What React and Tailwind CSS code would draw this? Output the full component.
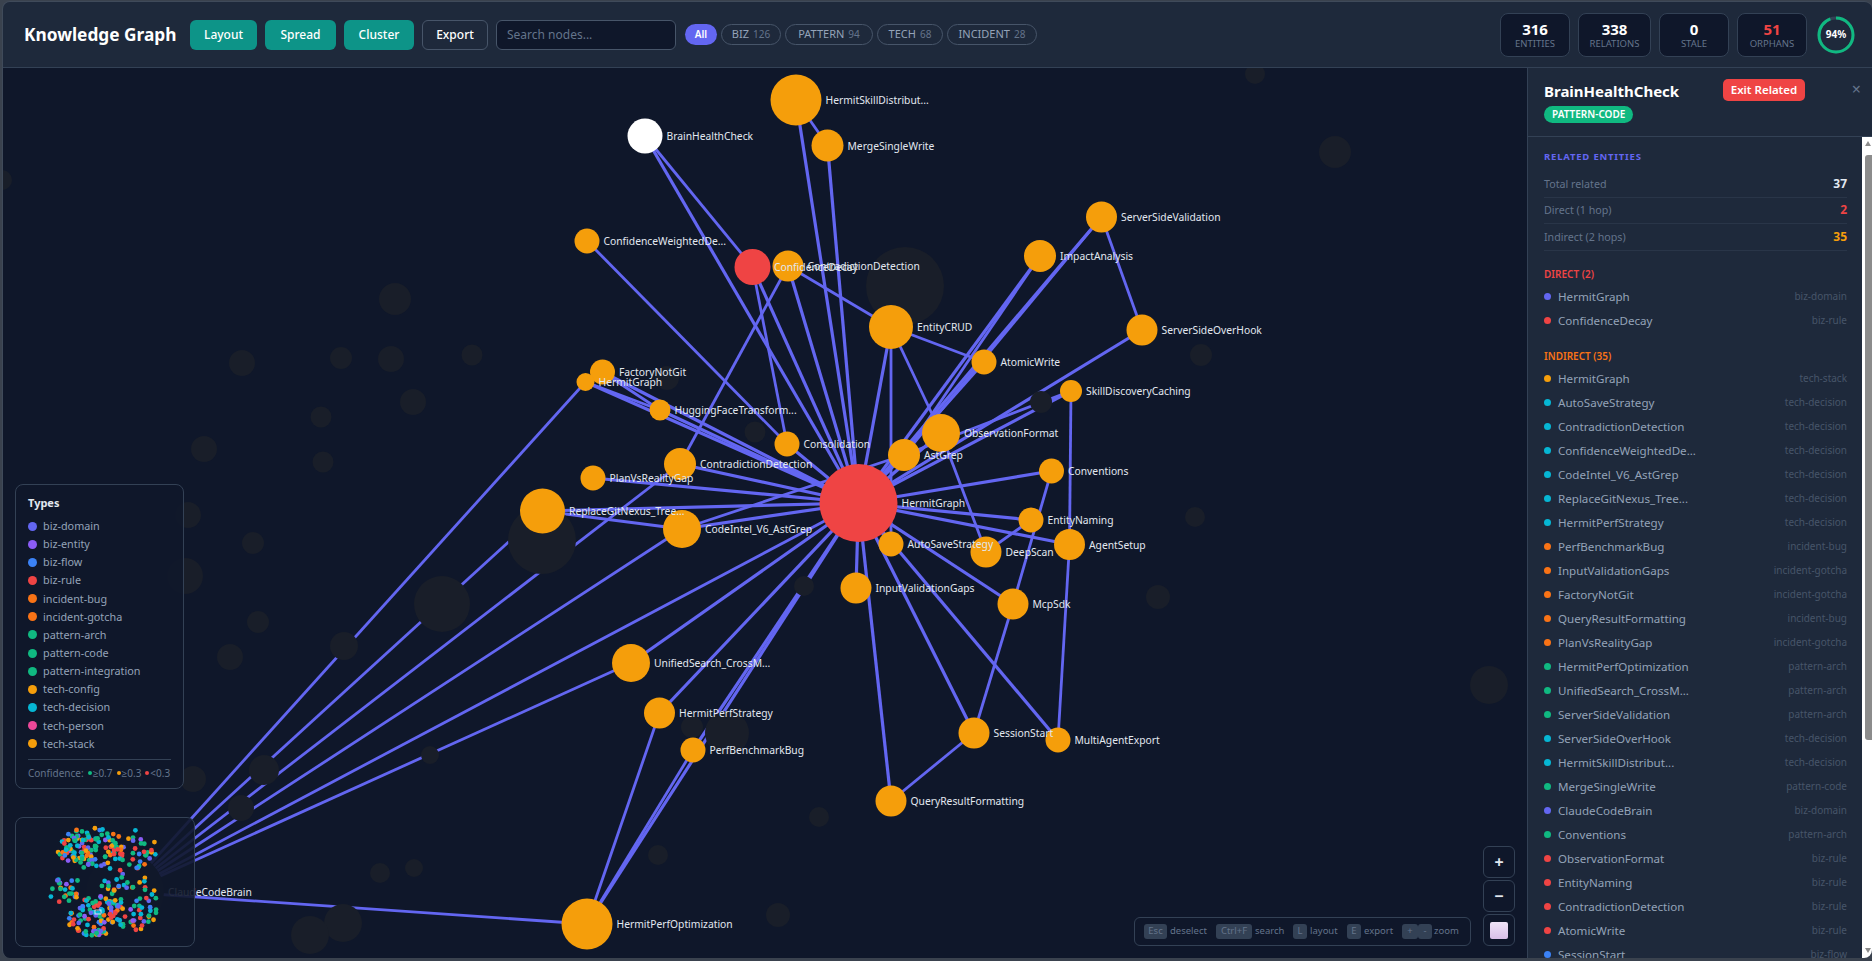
import React from 'react'

const FONT = { fontFamily: '"Noto Sans", "Open Sans", sans-serif' }

const nodes = {
  skill: { x: 796, y: 100, r: 25.5, label: 'HermitSkillDistribut...' },
  brain: { x: 645, y: 136, r: 17.5, label: 'BrainHealthCheck', fill: '#ffffff' },
  merge: { x: 827.5, y: 145.5, r: 16, label: 'MergeSingleWrite' },
  weighted: { x: 587, y: 241, r: 12.5, label: 'ConfidenceWeightedDe...' },
  decay: { x: 752.5, y: 267, r: 18, label: 'ConfidenceDecay', fill: '#ef4444', labelX: 774 },
  contra: { x: 788, y: 266, r: 15.5, label: 'ContradictionDetection' },
  crud: { x: 891, y: 327, r: 22, label: 'EntityCRUD' },
  impact: { x: 1040, y: 256, r: 16, label: 'ImpactAnalysis' },
  validation: { x: 1101.5, y: 217, r: 15.5, label: 'ServerSideValidation' },
  overhook: { x: 1142, y: 330, r: 15.5, label: 'ServerSideOverHook' },
  atomic: { x: 984, y: 362, r: 12.5, label: 'AtomicWrite' },
  caching: { x: 1071, y: 391, r: 11, label: 'SkillDiscoveryCaching' },
  factory: { x: 602.5, y: 372, r: 12.5, label: 'FactoryNotGit' },
  hgSmall: { x: 585.5, y: 382, r: 9, label: 'HermitGraph' },
  hugging: { x: 660, y: 410, r: 10.5, label: 'HuggingFaceTransform...' },
  consolidation: { x: 787, y: 444, r: 12.5, label: 'Consolidation' },
  observation: { x: 941, y: 433, r: 19, label: 'ObservationFormat' },
  astgrep: { x: 904, y: 455, r: 16, label: 'AstGrep' },
  contra2: { x: 680, y: 464, r: 16, label: 'ContradictionDetection' },
  plan: { x: 593, y: 478, r: 12.5, label: 'PlanVsRealityGap' },
  conventions: { x: 1051.5, y: 471, r: 12.5, label: 'Conventions' },
  hub: { x: 858.5, y: 503, r: 39, label: 'HermitGraph', fill: '#ef4444' },
  replace: { x: 542.5, y: 511, r: 22.5, label: 'ReplaceGitNexus_Tree...' },
  codeintel: { x: 682, y: 529, r: 19, label: 'CodeIntel_V6_AstGrep' },
  autosave: { x: 891, y: 544, r: 12.5, label: 'AutoSaveStrategy' },
  naming: { x: 1031, y: 520, r: 12.5, label: 'EntityNaming' },
  deepscan: { x: 986, y: 552, r: 15.5, label: 'DeepScan' },
  agent: { x: 1069.5, y: 544.5, r: 15.5, label: 'AgentSetup' },
  input: { x: 856, y: 588, r: 15.5, label: 'InputValidationGaps' },
  mcp: { x: 1013, y: 604, r: 15.5, label: 'McpSdk' },
  unified: { x: 631, y: 663, r: 19, label: 'UnifiedSearch_CrossM...' },
  perfStrategy: { x: 659.5, y: 713, r: 15.5, label: 'HermitPerfStrategy' },
  perfBug: { x: 693, y: 750, r: 12.5, label: 'PerfBenchmarkBug' },
  session: { x: 974, y: 733, r: 15.5, label: 'SessionStart' },
  multi: { x: 1058, y: 740, r: 12.5, label: 'MultiAgentExport' },
  query: { x: 891, y: 801, r: 15.5, label: 'QueryResultFormatting' },
  perfOpt: { x: 587, y: 924, r: 25.5, label: 'HermitPerfOptimization' },
  claude: { x: 125, y: 892, r: 39, label: 'ClaudeCodeBrain', fill: '#191e29' },
}

const hubLinks = [
  'skill', 'merge', 'brain', 'decay', 'contra', 'crud', 'impact', 'validation', 'overhook', 'atomic', 'caching',
  'factory', 'hgSmall', 'hugging', 'consolidation', 'observation', 'astgrep', 'contra2', 'plan', 'conventions',
  'replace', 'codeintel', 'autosave', 'naming', 'agent', 'input', 'mcp', 'unified', 'perfStrategy', 'perfBug',
  'session', 'multi', 'query', 'perfOpt',
]

const extraLinks = [
  ['skill', 'merge'], ['brain', 'decay'], ['contra', 'crud'], ['weighted', 'consolidation'],
  ['decay', 'consolidation'], ['contra', 'contra2'], ['impact', 'astgrep'], ['validation', 'overhook'],
  ['validation', 'astgrep'], ['crud', 'atomic'], ['crud', 'autosave'], ['crud', 'observation'],
  ['observation', 'deepscan'], ['caching', 'agent'], ['caching', 'astgrep'], ['conventions', 'mcp'],
  ['agent', 'multi'], ['mcp', 'session'], ['session', 'query'], ['perfOpt', 'perfStrategy'],
  ['perfOpt', 'perfBug'], ['naming', 'deepscan'], ['codeintel', 'astgrep'], ['replace', 'codeintel'],
  ['factory', 'hugging'], ['hgSmall', 'hugging'], ['claude', 'hgSmall'], ['claude', 'replace'],
  ['claude', 'contra2'], ['claude', 'codeintel'], ['claude', 'hub'], ['claude', 'unified'], ['claude', 'perfOpt'],
]

// dimmed entities, they sit over the edges
const dimmed = [
  [2, 180, 10], [395, 299, 16], [242, 363, 13], [341, 358, 11], [391, 359, 13], [472, 355, 10.5], [413, 402, 13],
  [321, 417, 10.5], [204, 449, 13], [323, 462, 10.5], [1255, 74, 10], [1335, 152, 16], [905, 286, 39], [542, 540, 34],
  [442, 604, 28], [344, 646, 14], [230, 657, 13], [264, 770, 15], [430, 755, 9], [343, 923, 19], [310, 935, 19],
  [380, 873, 10], [414, 868, 9], [1489, 685, 19], [1195, 517, 10], [1158, 597, 12], [1041, 402, 11], [1201, 355, 11],
  [755, 432, 10.5], [804, 586, 10], [692, 727, 11], [727, 733, 22], [819, 817, 10], [658, 855, 10], [778, 915, 12],
  [188, 515, 13], [185, 576, 18], [253, 543, 11], [258, 622, 11], [193, 779, 13], [241, 808, 13], [667, 378, 12],
]

const typeColors = {
  'biz-domain': '#6366f1', 'biz-entity': '#8b5cf6', 'biz-flow': '#3b82f6', 'biz-rule': '#ef4444',
  'incident-bug': '#f97316', 'incident-gotcha': '#f97316', 'pattern-arch': '#10b981', 'pattern-code': '#10b981',
  'pattern-integration': '#10b981', 'tech-config': '#f59e0b', 'tech-decision': '#06b6d4', 'tech-person': '#ec4899',
  'tech-stack': '#f59e0b',
}

const indirect = [
  ['HermitGraph', 'tech-stack'], ['AutoSaveStrategy', 'tech-decision'], ['ContradictionDetection', 'tech-decision'],
  ['ConfidenceWeightedDe...', 'tech-decision'], ['CodeIntel_V6_AstGrep', 'tech-decision'],
  ['ReplaceGitNexus_Tree...', 'tech-decision'], ['HermitPerfStrategy', 'tech-decision'],
  ['PerfBenchmarkBug', 'incident-bug'], ['InputValidationGaps', 'incident-gotcha'], ['FactoryNotGit', 'incident-gotcha'],
  ['QueryResultFormatting', 'incident-bug'], ['PlanVsRealityGap', 'incident-gotcha'],
  ['HermitPerfOptimization', 'pattern-arch'], ['UnifiedSearch_CrossM...', 'pattern-arch'],
  ['ServerSideValidation', 'pattern-arch'], ['ServerSideOverHook', 'tech-decision'],
  ['HermitSkillDistribut...', 'tech-decision'], ['MergeSingleWrite', 'pattern-code'], ['ClaudeCodeBrain', 'biz-domain'],
  ['Conventions', 'pattern-arch'], ['ObservationFormat', 'biz-rule'], ['EntityNaming', 'biz-rule'],
  ['ContradictionDetection', 'biz-rule'], ['AtomicWrite', 'biz-rule'], ['SessionStart', 'biz-flow'],
]

const stats = [
  { value: 316, label: 'ENTITIES', w: 'w-[70px]' },
  { value: 338, label: 'RELATIONS', w: 'w-[73px]' },
  { value: 0, label: 'STALE', w: 'w-[70px]' },
  { value: 51, label: 'ORPHANS', w: 'w-[70px]', color: 'text-[#ef4444]' },
]

const filters = [
  ['BIZ', 126, 'w-[60px]'], ['PATTERN', 94, 'w-[88px]'], ['TECH', 68, 'w-[66px]'], ['INCIDENT', 28, 'w-[90px]'],
]

const actions = [['Layout', 'w-[67px]'], ['Spread', 'w-[71px]'], ['Cluster', 'w-[70px]']]

// seeded so the minimap is the same on every render
function miniDots() {
  let seed = 42
  const rnd = () => {
    seed = (seed * 16807) % 2147483647
    return seed / 2147483647
  }
  const clusters = [
    { x: 75, y: 30, rx: 34, ry: 20, n: 115 },
    { x: 80, y: 98, rx: 30, ry: 20, n: 105 },
    { x: 120, y: 85, rx: 26, ry: 28, n: 50 },
    { x: 48, y: 70, rx: 15, ry: 18, n: 24 },
    { x: 120, y: 32, rx: 24, ry: 20, n: 36 },
    { x: 95, y: 62, rx: 18, ry: 15, n: 16 },
  ]
  const colors = ['#10b981', '#10b981', '#10b981', '#f59e0b', '#f59e0b', '#06b6d4', '#06b6d4', '#ef4444', '#ef4444', '#3b82f6', '#6366f1', '#8b5cf6', '#f97316']
  const dots = []
  clusters.forEach((c) => {
    for (let i = 0; i < c.n; i++) {
      const a = rnd() * Math.PI * 2
      const d = Math.sqrt(rnd())
      dots.push({ x: c.x + Math.cos(a) * d * c.rx, y: c.y + Math.sin(a) * d * c.ry, fill: colors[Math.floor(rnd() * colors.length)] })
    }
  })
  return dots
}

function Graph() {
  const links = [...hubLinks.map((k) => ['hub', k]), ...extraLinks]
  return (
    <svg className="absolute inset-0 h-full w-full" viewBox="3 68 1524 890" preserveAspectRatio="none">
      {links.map(([a, b], i) => (
        <line
          key={i}
          x1={nodes[a].x}
          y1={nodes[a].y}
          x2={nodes[b].x}
          y2={nodes[b].y}
          stroke="#6366f1"
          strokeWidth={a === 'hub' ? 3.2 : 2.8}
        />
      ))}
      {dimmed.map(([x, y, r], i) => (
        <circle key={i} cx={x} cy={y} r={r} fill="#191e29" />
      ))}
      {Object.entries(nodes).map(([k, n]) => (
        <circle key={k} cx={n.x} cy={n.y} r={n.r} fill={n.fill || '#f59e0b'} />
      ))}
      {Object.entries(nodes).map(([k, n]) => (
        <text key={k} x={n.labelX || n.x + n.r + 4} y={n.y + 4} fontSize="10.3" fill="#e2e8f0" style={FONT}>
          {n.label}
        </text>
      ))}
    </svg>
  )
}

function Legend() {
  return (
    <div className="absolute left-[12px] top-[416px] h-[305px] w-[169px] rounded-lg border border-[#334155] bg-[#0f172a]/90 px-[12px] pt-[10px]">
      <div className="mb-[6px] text-[11px] font-bold leading-[16px] text-[#e2e8f0]">Types</div>
      {Object.entries(typeColors).map(([name, color]) => (
        <div key={name} className="flex h-[18.15px] items-center gap-[6px] text-[10.8px] text-[#94a3b8]">
          <span className="h-[9px] w-[9px] rounded-full" style={{ background: color }} />
          {name}
        </div>
      ))}
      <div className="mt-[6px] flex items-center whitespace-nowrap border-t border-[#334155] pt-[6px] text-[10px] text-[#64748b]">
        Confidence:
        <span className="ml-[4px] mr-[1px] h-[4px] w-[4px] rounded-full bg-[#10b981]" />≥0.7
        <span className="ml-[4px] mr-[1px] h-[4px] w-[4px] rounded-full bg-[#f59e0b]" />≥0.3
        <span className="ml-[4px] mr-[1px] h-[4px] w-[4px] rounded-full bg-[#ef4444]" />&lt;0.3
      </div>
    </div>
  )
}

function Minimap() {
  return (
    <div className="absolute left-[12px] top-[749px] h-[130px] w-[180px] overflow-hidden rounded-lg border border-[#334155] bg-[#0f172a]/90">
      <svg width="180" height="130">
        {miniDots().map((d, i) => (
          <circle key={i} cx={d.x} cy={d.y} r="2.4" fill={d.fill} />
        ))}
        <rect x="79" y="92" width="6" height="4" fill="none" stroke="#ffffff" strokeOpacity="0.8" />
      </svg>
    </div>
  )
}

function Kbd({ children, w }) {
  return <span className={`flex h-[15px] items-center justify-center rounded-[3px] bg-[#334155] text-[9.5px] text-[#64748b] ${w}`}>{children}</span>
}

function Shortcuts() {
  return (
    <div className="absolute right-[56px] top-[849px] flex h-[29px] w-[337px] items-center rounded-md border border-[#334155] pl-[9px] text-[9.5px] text-[#64748b]">
      <Kbd w="w-[23px]">Esc</Kbd><span className="ml-[3px] mr-[8px] w-[38px]">deselect</span>
      <Kbd w="w-[36px]">Ctrl+F</Kbd><span className="ml-[3px] mr-[9px] w-[29px]">search</span>
      <Kbd w="w-[14px]">L</Kbd><span className="ml-[3px] mr-[9px] w-[28px]">layout</span>
      <Kbd w="w-[14px]">E</Kbd><span className="ml-[3px] mr-[9px] w-[29px]">export</span>
      <Kbd w="w-[16px]">+</Kbd><Kbd w="w-[14px]">-</Kbd><span className="ml-[2px]">zoom</span>
    </div>
  )
}

function ZoomControls() {
  return (
    <div className="absolute right-[12px] top-[778px] flex flex-col gap-[2px]">
      {['+', '−'].map((s) => (
        <button key={s} className="flex h-[32px] w-[32px] items-center justify-center rounded-md border border-[#334155] bg-[#0f172a] text-[16px] font-bold text-[#e2e8f0]">
          {s}
        </button>
      ))}
      <button className="flex h-[32px] w-[32px] items-center justify-center rounded-md border border-[#334155] bg-[#0f172a]">
        <span className="h-[17px] w-[18px] rounded-[2px] bg-gradient-to-b from-[#efe4f7] to-[#d9bfe8]" />
      </button>
    </div>
  )
}

function Section({ title, color, items }) {
  return (
    <div className="mt-[15px]">
      <div className={`text-[10px] font-semibold leading-[16px] ${color}`}>{title}</div>
      <div className="mt-[3px]">
        {items.map(([name, type], i) => (
          <div key={i} className="flex h-[24px] items-center">
            <span className="mr-[7px] h-[7px] w-[7px] rounded-full" style={{ background: typeColors[type] }} />
            <span className="flex-1 text-[11.6px] text-[#94a3b8]">{name}</span>
            <span className="text-[10px] text-[#475569]">{type}</span>
          </div>
        ))}
      </div>
    </div>
  )
}

function Scrollbar() {
  return (
    <div className="relative w-[10px] shrink-0 bg-white">
      <div className="ml-[3px] mt-[4px] h-0 w-0 border-x-[3.5px] border-b-[5px] border-x-transparent border-b-[#8c8c8c]" />
      <div className="absolute left-[3px] right-0 top-[18px] h-[585px] rounded-l-[3px] bg-[#8c8c8c]" />
      <div className="absolute bottom-[5px] left-[3px] h-0 w-0 border-x-[3.5px] border-t-[5px] border-x-transparent border-t-[#8c8c8c]" />
    </div>
  )
}

function Row({ label, value, color }) {
  return (
    <div className="flex h-[26.5px] items-center justify-between border-b border-[#293548] text-[10.7px] text-[#64748b]">
      <span>{label}</span>
      <span className={`text-[12px] font-bold ${color}`}>{value}</span>
    </div>
  )
}

function DetailPanel() {
  return (
    <aside className="flex w-[345px] shrink-0 flex-col overflow-hidden border-l border-[#334155] bg-[#1e293b]">
      <div className="relative h-[69px] shrink-0 border-b border-[#334155] px-[16px] pt-[11px]">
        <div className="flex items-start">
          <h2 className="text-[15px] font-bold leading-[24px] text-white">BrainHealthCheck</h2>
          <button className="ml-auto mr-[51px] h-[22px] w-[82px] rounded-[5px] bg-[#ef4444] text-[11.5px] font-semibold text-white">
            Exit Related
          </button>
        </div>
        <span className="absolute left-[16px] top-[38px] rounded-full bg-[#10b981] px-[8px] text-[10px] font-semibold leading-[17px] text-white">
          PATTERN-CODE
        </span>
        <span className="absolute right-[11px] top-[11px] text-[16px] leading-[20px] text-[#64748b]">×</span>
      </div>
      <div className="flex min-h-0 flex-1">
        <div className="min-w-0 flex-1 overflow-hidden pl-[16px] pr-[15px] pt-[12px]">
          <div className="text-[9.5px] font-bold leading-[16px] tracking-[0.8px] text-[#6366f1]">RELATED ENTITIES</div>
          <div className="mb-[2px] mt-[6px]">
            <Row label="Total related" value="37" color="text-[#e2e8f0]" />
            <Row label="Direct (1 hop)" value="2" color="text-[#ef4444]" />
            <Row label="Indirect (2 hops)" value="35" color="text-[#f59e0b]" />
          </div>
          <Section
            title="DIRECT (2)"
            color="text-[#ef4444]"
            items={[['HermitGraph', 'biz-domain'], ['ConfidenceDecay', 'biz-rule']]}
          />
          <Section title="INDIRECT (35)" color="text-[#f97316]" items={indirect} />
        </div>
        <Scrollbar />
      </div>
    </aside>
  )
}

function Header() {
  return (
    <header className="flex h-[66px] shrink-0 items-center border-b border-[#334155] bg-[#1e293b] pl-[21px] pr-[17px]">
      <h1 className="w-[166px] shrink-0 text-[17.3px] font-bold text-white">Knowledge Graph</h1>
      <div className="flex items-center gap-[8px]">
        {actions.map(([b, w]) => (
          <button key={b} className={`h-[30px] rounded-md bg-[#0d9488] text-[12px] font-medium text-white ${w}`}>
            {b}
          </button>
        ))}
        <button className="h-[30px] w-[66px] rounded-md border border-[#475569] text-[12px] font-medium text-white">
          Export
        </button>
        <input
          placeholder="Search nodes..."
          className="h-[30px] w-[180px] rounded-md border border-[#475569] bg-[#0f172a] px-[10px] text-[12px] text-white placeholder:text-[#64748b]"
        />
      </div>
      <div className="ml-[9px] flex items-center gap-[4px]">
        <span className="flex h-[21px] w-[32px] items-center justify-center rounded-full bg-[#6366f1] text-[10px] font-semibold text-white">
          All
        </span>
        {filters.map(([name, count, w]) => (
          <span key={name} className={`flex h-[21px] items-center justify-center gap-[4px] rounded-full border border-[#475569] text-[11px] text-[#94a3b8] ${w}`}>
            {name} <span className="text-[10px] text-[#64748b]">{count}</span>
          </span>
        ))}
      </div>
      <div className="ml-auto flex items-center gap-[8px]">
        {stats.map((s) => (
          <div key={s.label} className={`flex h-[44px] flex-col items-center justify-center rounded-lg border border-[#334155] bg-[#0f172a] ${s.w}`}>
            <span className={`text-[15px] font-bold leading-[18px] ${s.color || 'text-white'}`}>{s.value}</span>
            <span className="text-[9.5px] leading-[12px] text-[#64748b]">{s.label}</span>
          </div>
        ))}
        <div className="relative ml-[2px] h-[38px] w-[38px]">
          <svg viewBox="0 0 38 38" className="h-full w-full -rotate-90">
            <circle cx="19" cy="19" r="17" fill="none" stroke="#334155" strokeWidth="3" />
            <circle cx="19" cy="19" r="17" fill="none" stroke="#10b981" strokeWidth="3" strokeDasharray="100.4 106.8" />
          </svg>
          <span className="absolute inset-0 flex items-center justify-center text-[10px] font-bold text-white">94%</span>
        </div>
      </div>
    </header>
  )
}

export default function App() {
  return (
    <div className="h-[961px] overflow-hidden bg-[#3a424e] pb-[3px] pl-[2px] pt-[1px]" style={FONT}>
      <div className="flex h-full flex-col overflow-hidden rounded-lg border-l border-t border-[#3f4a5a]">
        <Header />
        <div className="flex min-h-0 flex-1">
          <main className="relative min-w-0 flex-1 overflow-hidden bg-[#0f172a]">
            <Graph />
            <Legend />
            <Minimap />
            <Shortcuts />
            <ZoomControls />
          </main>
          <DetailPanel />
        </div>
      </div>
    </div>
  )
}
